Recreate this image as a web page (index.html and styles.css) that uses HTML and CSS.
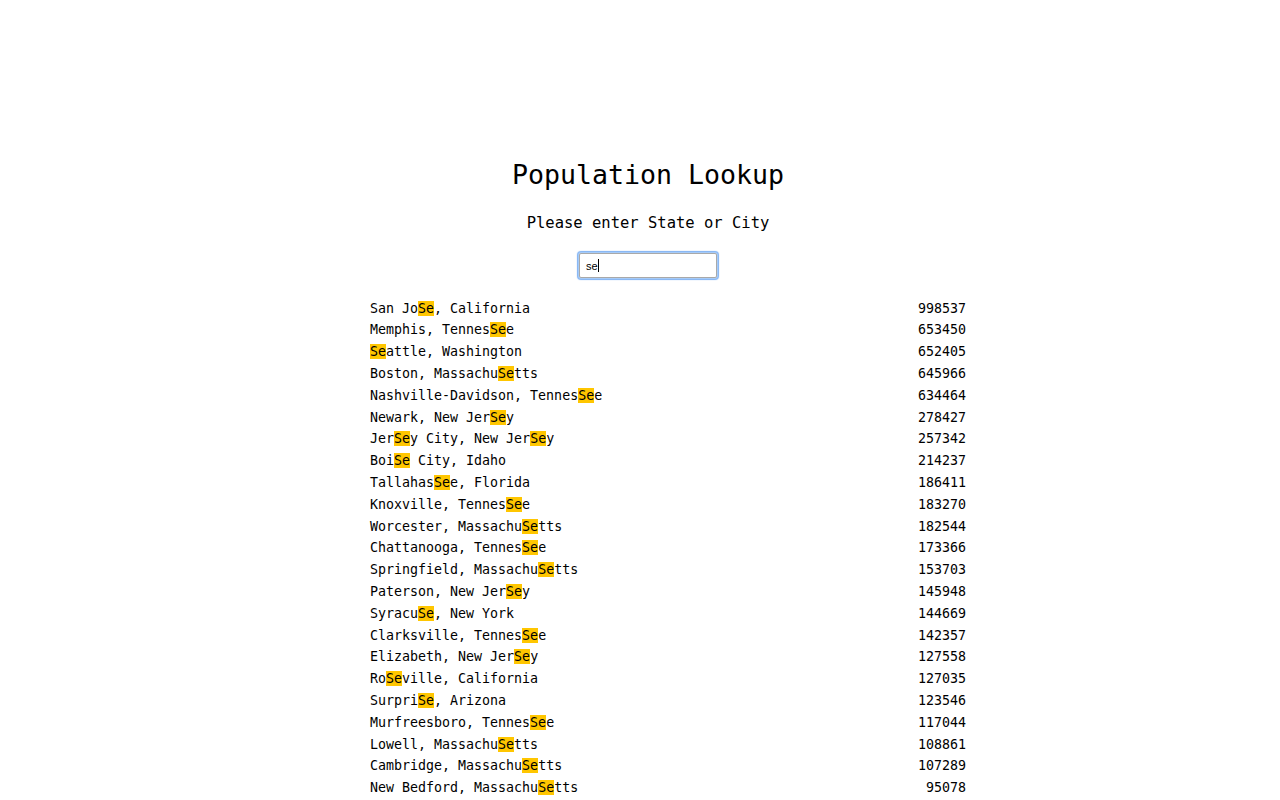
FILE: index.html
```html
<!DOCTYPE html>
<html lang="en">
<head>
<meta charset="utf-8">
<title>Population Lookup</title>
<link rel="stylesheet" href="styles.css">
</head>
<body>
<main class="page">
  <h1 class="title">Population Lookup</h1>
  <p class="subtitle">Please enter State or City</p>
  <div class="search"><span class="search-text">se</span><span class="caret"></span></div>
  <ul class="results">
    <li class="row"><span class="place">San Jo<span class="hl">Se</span>, California</span><span class="pop">998537</span></li>
    <li class="row"><span class="place">Memphis, Tennes<span class="hl">Se</span>e</span><span class="pop">653450</span></li>
    <li class="row"><span class="place"><span class="hl">Se</span>attle, Washington</span><span class="pop">652405</span></li>
    <li class="row"><span class="place">Boston, Massachu<span class="hl">Se</span>tts</span><span class="pop">645966</span></li>
    <li class="row"><span class="place">Nashville-Davidson, Tennes<span class="hl">Se</span>e</span><span class="pop">634464</span></li>
    <li class="row"><span class="place">Newark, New Jer<span class="hl">Se</span>y</span><span class="pop">278427</span></li>
    <li class="row"><span class="place">Jer<span class="hl">Se</span>y City, New Jer<span class="hl">Se</span>y</span><span class="pop">257342</span></li>
    <li class="row"><span class="place">Boi<span class="hl">Se</span> City, Idaho</span><span class="pop">214237</span></li>
    <li class="row"><span class="place">Tallahas<span class="hl">Se</span>e, Florida</span><span class="pop">186411</span></li>
    <li class="row"><span class="place">Knoxville, Tennes<span class="hl">Se</span>e</span><span class="pop">183270</span></li>
    <li class="row"><span class="place">Worcester, Massachu<span class="hl">Se</span>tts</span><span class="pop">182544</span></li>
    <li class="row"><span class="place">Chattanooga, Tennes<span class="hl">Se</span>e</span><span class="pop">173366</span></li>
    <li class="row"><span class="place">Springfield, Massachu<span class="hl">Se</span>tts</span><span class="pop">153703</span></li>
    <li class="row"><span class="place">Paterson, New Jer<span class="hl">Se</span>y</span><span class="pop">145948</span></li>
    <li class="row"><span class="place">Syracu<span class="hl">Se</span>, New York</span><span class="pop">144669</span></li>
    <li class="row"><span class="place">Clarksville, Tennes<span class="hl">Se</span>e</span><span class="pop">142357</span></li>
    <li class="row"><span class="place">Elizabeth, New Jer<span class="hl">Se</span>y</span><span class="pop">127558</span></li>
    <li class="row"><span class="place">Ro<span class="hl">Se</span>ville, California</span><span class="pop">127035</span></li>
    <li class="row"><span class="place">Surpri<span class="hl">Se</span>, Arizona</span><span class="pop">123546</span></li>
    <li class="row"><span class="place">Murfreesboro, Tennes<span class="hl">Se</span>e</span><span class="pop">117044</span></li>
    <li class="row"><span class="place">Lowell, Massachu<span class="hl">Se</span>tts</span><span class="pop">108861</span></li>
    <li class="row"><span class="place">Cambridge, Massachu<span class="hl">Se</span>tts</span><span class="pop">107289</span></li>
    <li class="row"><span class="place">New Bedford, Massachu<span class="hl">Se</span>tts</span><span class="pop">95078</span></li>
  </ul>
</main>
</body>
</html>
```

FILE: styles.css
```css
html, body {
  margin: 0;
  padding: 0;
  background: #ffffff;
}

body {
  font-family: "DejaVu Sans Mono", "Liberation Mono", monospace;
  color: #000000;
  padding-left: 16px;
  height: 800px;
  overflow: hidden;
}

.page {
  display: flex;
  flex-direction: column;
  align-items: center;
  padding-top: 159px;
}

.title {
  margin: 0;
  font-size: 26.6px;
  line-height: 32px;
  font-weight: normal;
}

.subtitle {
  margin: 22px 0 0;
  font-size: 15.5px;
  line-height: 20px;
}

.search {
  margin-top: 20px;
  box-sizing: border-box;
  width: 138px;
  height: 25px;
  border: 1px solid #a9a9a9;
  border-radius: 2px;
  box-shadow: 0 0 0 1px #a6cbf8, 0 0 1px 2px #7eb1f3;
  display: flex;
  align-items: center;
  padding-left: 6px;
  font-family: "Liberation Sans", Arial, sans-serif;
  font-size: 11px;
  color: #000;
}

.caret {
  display: inline-block;
  width: 1px;
  height: 13px;
  background: #000;
  margin-left: 0.5px;
}

.results {
  list-style: none;
  margin: 19.6px 0 0;
  padding: 0 0 0 40px;
  width: 596px;
}

.row {
  display: flex;
  justify-content: space-between;
  font-size: 13.3px;
  line-height: 21.8px;
  white-space: pre;
}

.hl {
  background: #ffc600;
}
```
